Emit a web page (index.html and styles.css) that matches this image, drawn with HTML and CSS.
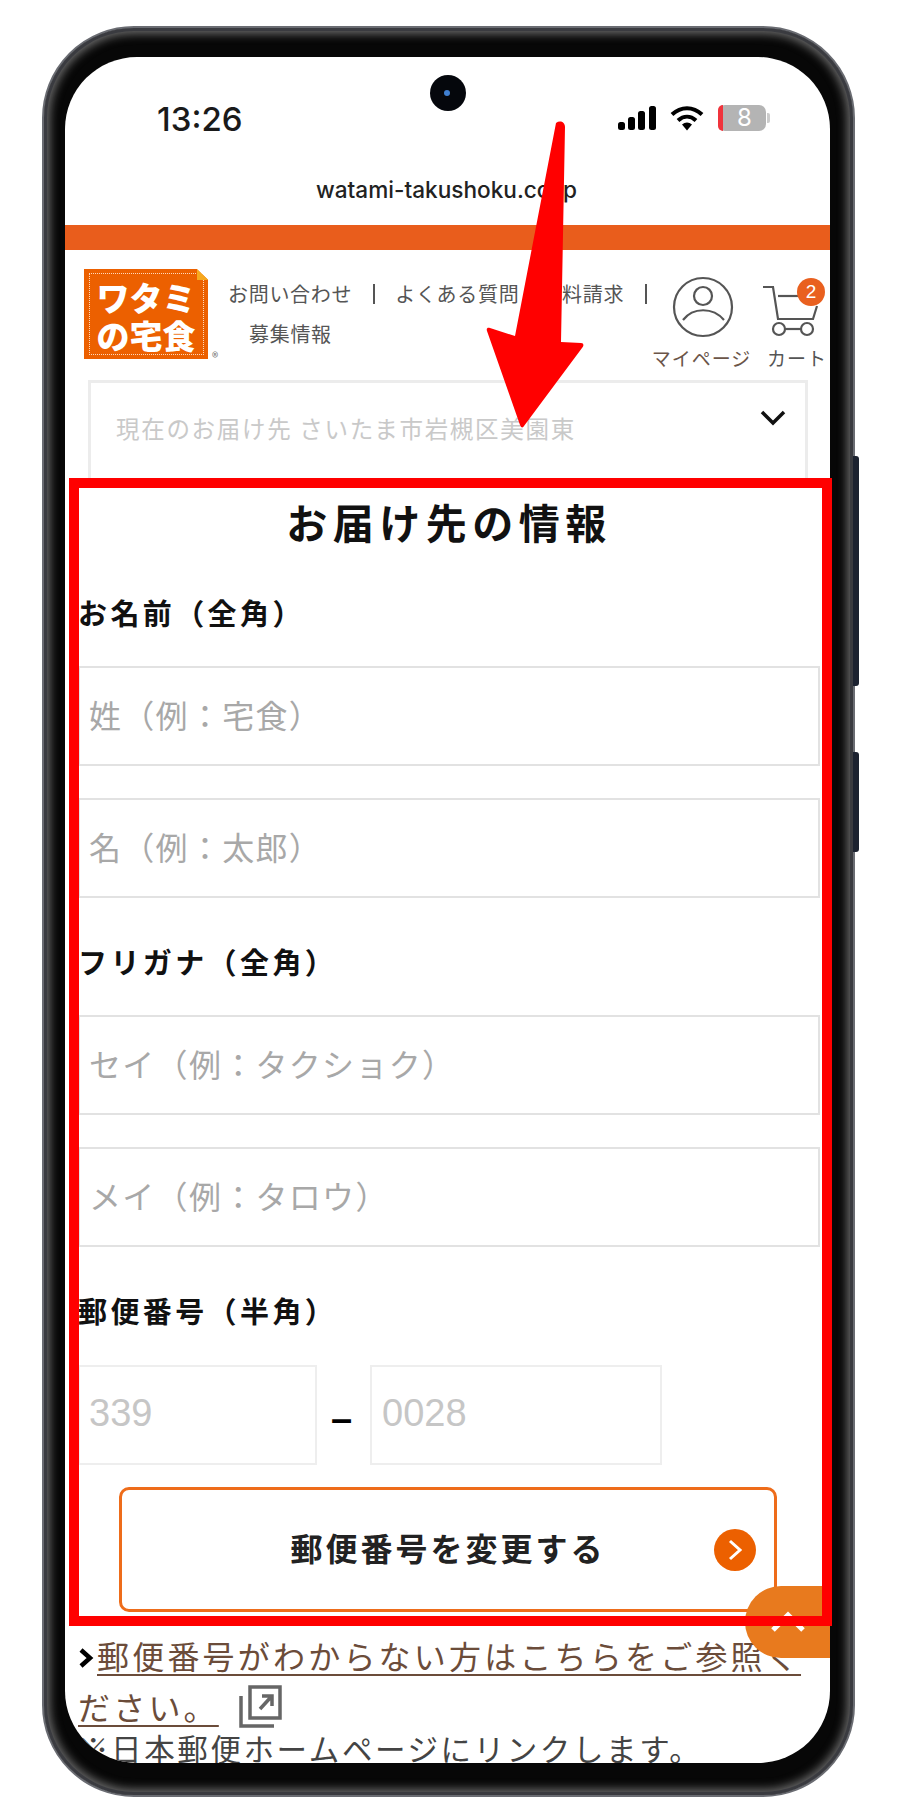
FILE: index.html
```html
<!DOCTYPE html>
<html lang="ja">
<head>
  <meta charset="UTF-8">
  <title>お届け先の情報</title>
  <link rel="stylesheet" href="styles.css">
</head>
<body>
  <div class="stage">
    <div class="side-btn side-btn-long"></div>
    <div class="side-btn side-btn-short"></div>

    <div class="phone">
      <div class="screen">
        <!-- status bar -->
        <div class="status">
          <span class="time">13:26</span>
          <div class="status-icons">
            <svg width="38" height="24" viewBox="0 0 38 24">
              <rect x="0" y="16" width="7" height="8" rx="2.5"/>
              <rect x="10" y="11" width="7" height="13" rx="2.5"/>
              <rect x="20" y="5" width="7" height="19" rx="2.5"/>
              <rect x="31" y="0" width="7" height="24" rx="2.5"/>
            </svg>
            <svg width="34" height="25" viewBox="0 0 34 25">
              <path d="M2 8.5C11 0 23 0 32 8.5" class="wifi-arc"/>
              <path d="M8 14.5C13.500 9.500 20.500 9.500 26 14.500" class="wifi-arc"/>
              <path d="M12 18.500L17 24.500L22 18.500C19 15.800 15 15.800 12 18.500Z"/>
            </svg>
            <div class="battery"><span class="battery-low"></span>8</div>
            <span class="battery-nub"></span>
          </div>
        </div>
        <div class="url">watami-takushoku.co.jp</div>
        <div class="orange-bar"></div>

        <!-- site header -->
        <header class="site-header">
          <div class="logo">
            <div class="logo-dots"></div>
            <span class="logo-line">ワタミ</span>
            <span class="logo-line">の宅食</span>
            <span class="logo-fold"></span>
          </div>
          <span class="logo-mark">®</span>
          <ul class="head-nav">
            <li>お問い合わせ</li>
            <li>よくある質問</li>
            <li>資料請求</li>
            <li>募集情報</li>
          </ul>
          <div class="head-icons">
            <div class="head-icon mypage">
              <svg width="62" height="62" viewBox="0 0 62 62" class="line-icon">
                <circle cx="32" cy="31" r="29"/>
                <circle cx="32" cy="20" r="9"/>
                <path d="M12 44C22 31 42 31 53 44"/>
              </svg>
              <span>マイページ</span>
            </div>
            <div class="head-icon cart">
              <svg width="62" height="62" viewBox="0 0 62 62" class="line-icon">
                <path d="M-3 11H7L12 43H47L51 30"/>
                <path d="M12 20H40"/>
                <circle cx="13" cy="53" r="6"/>
                <circle cx="41" cy="53" r="6"/>
                <path d="M19 53H35"/>
              </svg>
              <span class="badge">2</span>
              <span>カート</span>
            </div>
          </div>
        </header>

        <div class="area-select">
          <span>現在のお届け先 さいたま市岩槻区美園東</span>
          <svg width="26" height="16" viewBox="0 0 26 16" class="area-chevron">
            <path d="M2 2L13 13L24 2"/>
          </svg>
        </div>

        <!-- form -->
        <section class="form">
          <h1>お届け先の情報</h1>

          <div class="label">お名前（全角）</div>
          <div class="field">姓（例：宅食）</div>
          <div class="field">名（例：太郎）</div>

          <div class="label">フリガナ（全角）</div>
          <div class="field">セイ（例：タクショク）</div>
          <div class="field">メイ（例：タロウ）</div>

          <div class="label">郵便番号（半角）</div>
          <div class="zip-row">
            <div class="field zip zip-first">339</div>
            <span class="zip-dash">–</span>
            <div class="field zip zip-second">0028</div>
          </div>

          <div class="change-btn">
            <span>郵便番号を変更する</span>
            <span class="change-arrow">
              <svg width="16" height="24" viewBox="0 0 16 24"><path d="M3 3L13 12L3 21"/></svg>
            </span>
          </div>
        </section>

        <div class="notes">
          <p class="zip-link">
            <svg width="16" height="22" viewBox="0 0 16 22" class="link-chevron"><path d="M3 3L12 11L3 19"/></svg><a>郵便番号がわからない方はこちらをご参照ください。</a>
            <svg width="44" height="44" viewBox="0 0 44 44" class="ext-icon">
              <path d="M11 3H41V34H11Z"/>
              <path d="M2 12V42H35"/>
              <path d="M21 25L32 13M23 12H33V22"/>
            </svg>
          </p>
          <p class="zip-note">※日本郵便ホームページにリンクします。</p>
        </div>

        <div class="to-top">
          <svg width="36" height="22" viewBox="0 0 36 22"><path d="M3 19L18 4L33 19"/></svg>
        </div>
      </div>
    </div>

    <!-- camera hole and red annotations lie over the page -->
    <div class="camera"><span></span></div>
    <div class="red-frame"></div>
    <svg class="red-arrow" width="110" height="320" viewBox="0 0 110 320">
      <path d="M76 8C80 5 85 7 85 12L81 227L101 228C104 228 104 231 102 233L44 311C43 313 41 313 40 310L7 216C6 213 8 212 10 213L35 221Z"/>
    </svg>
  </div>
</body>
</html>
```

FILE: styles.css
```css
* {
  box-sizing: border-box;
}
body {
  margin: 0;
  background: #fff;
  font-family: "Noto Sans CJK JP", sans-serif;
  color: #111;
}
p, ul, h1 {
  margin: 0;
  padding: 0;
}
.stage {
  position: relative;
  width: 900px;
  height: 1800px;
  overflow: hidden;
  padding: 26px 0 0 42px;
}

/* phone body */
.phone {
  width: 813px;
  height: 1771px;
  padding: 29px 23px 0 21px;
  background: #070707;
  border: 2px solid #6a6c72;
  border-radius: 92px;
  box-shadow: inset 0 0 0 3px #3a3b40, inset 0 0 10px 6px #6a6a6a;
}
.screen {
  position: relative;
  width: 765px;
  height: 1706px;
  overflow: hidden;
  background: #fff;
  border-radius: 72px;
}
.side-btn {
  position: absolute;
  left: 853px;
  width: 6px;
  background: #1c2230;
  border-radius: 0 3px 3px 0;
}
.side-btn-long {
  top: 456px;
  height: 230px;
}
.side-btn-short {
  top: 752px;
  height: 100px;
}
.camera {
  position: absolute;
  left: 430px;
  top: 75px;
  width: 36px;
  height: 36px;
  background: #05070c;
  border-radius: 50%;
}
.camera span {
  display: block;
  width: 6px;
  height: 6px;
  margin: 15px 0 0 14px;
  background: #3f7fd0;
  border-radius: 50%;
}

/* status bar */
.status {
  display: flex;
  align-items: center;
  height: 32px;
  margin-top: 45px;
  padding: 0 60px 0 92px;
}
.time {
  padding-top: 2px;
  font-family: Inter, sans-serif;
  font-size: 33px;
  font-weight: 500;
  color: #1a1a1a;
}
.status-icons {
  display: flex;
  align-items: center;
  margin-left: auto;
}
.status-icons svg {
  fill: #000;
  margin-right: 14px;
}
.wifi-arc {
  fill: none;
  stroke: #000;
  stroke-width: 4;
}
.battery {
  position: relative;
  width: 48px;
  height: 26px;
  background: #b4b4b4;
  border-radius: 7px;
  font-family: Inter, sans-serif;
  font-size: 24px;
  line-height: 26px;
  color: #fff;
  text-align: center;
  padding-left: 5px;
}
.battery-low {
  position: absolute;
  left: 0;
  top: 0;
  width: 5px;
  height: 26px;
  background: #f0343c;
  border-radius: 5px 0 0 5px;
}
.battery-nub {
  width: 3px;
  height: 10px;
  margin-left: 1px;
  background: #ccc;
  border-radius: 0 2px 2px 0;
}
.url {
  margin-top: 41px;
  font-family: Inter, sans-serif;
  font-size: 22.6px;
  font-weight: 500;
  line-height: 30px;
  color: #222;
  text-align: center;
  padding-right: 2px;
}
.orange-bar {
  height: 25px;
  margin-top: 20px;
  background: #e95d1c;
}

/* header */
.site-header {
  position: relative;
  display: flex;
  height: 130px;
  padding: 19px 4px 0 19px;
}
.logo {
  position: relative;
  flex: none;
  width: 124px;
  height: 90px;
  padding-top: 9px;
  background: #ec6000;
  color: #fff;
  font-weight: 900;
  text-align: center;
  clip-path: polygon(0 0, 91% 0, 100% 12%, 100% 100%, 0 100%);
}
.logo-dots {
  position: absolute;
  left: 5px;
  top: 4px;
  right: 4px;
  bottom: 4px;
  border: 1.5px dotted #fcd9bd;
}
.logo-line {
  display: block;
  font-size: 33px;
  line-height: 38px;
}
.logo-fold {
  position: absolute;
  right: 0;
  top: 0;
  width: 11px;
  height: 11px;
  background: #f6a81e;
}
.logo-mark {
  position: absolute;
  left: 147px;
  top: 97px;
  font-size: 13px;
  color: #777;
}
.head-nav {
  flex: none;
  display: flex;
  flex-wrap: wrap;
  align-content: flex-start;
  width: 444px;
  list-style: none;
  font-size: 20px;
  letter-spacing: 0.7px;
  line-height: 40px;
  color: #555;
  margin-top: 5px;
}
.head-nav li {
  display: flex;
  align-items: center;
  margin-left: 20px;
}
.head-nav li::after {
  content: "";
  width: 2px;
  height: 20px;
  margin-left: 21px;
  background: #555;
}
.head-nav li:nth-child(2)::after {
  display: none;
}
.head-nav li:nth-child(3) {
  margin-left: 22px;
}
.head-nav li:last-child {
  margin-left: 41px;
}
.head-nav li:last-child::after {
  display: none;
}
.head-icons {
  display: flex;
  gap: 17px;
  margin-left: auto;
  margin-top: 7px;
}
.head-icon {
  position: relative;
  display: flex;
  flex-direction: column;
  align-items: center;
  font-size: 19px;
  letter-spacing: 1px;
  line-height: 26px;
  white-space: nowrap;
  color: #555;
}
.mypage {
  width: 99px;
  color: #6b5548;
}
.cart {
  width: 58px;
}
.line-icon {
  flex: none;
  margin-bottom: 7px;
  overflow: visible;
  fill: none;
  stroke: #555;
  stroke-width: 2.2;
}
.badge {
  position: absolute;
  left: 29px;
  top: 2px;
  width: 28px;
  height: 28px;
  background: #e9601f;
  border-radius: 50%;
  color: #fff;
  font-family: "Liberation Sans", sans-serif;
  font-size: 19px;
  line-height: 28px;
  letter-spacing: 0;
  text-align: center;
}

/* current address box */
.area-select {
  position: relative;
  height: 104px;
  margin: 0 22px 0 23px;
  padding: 27px 0 0 25px;
  border: 3px solid #ececec;
  font-size: 23.5px;
  letter-spacing: 1.7px;
  line-height: 36px;
  color: #c9c9c9;
}
.area-chevron {
  position: absolute;
  left: 669px;
  top: 27px;
  fill: none;
  stroke: #111;
  stroke-width: 3.5;
}

/* form */
.form {
  margin-top: -3px;
  padding: 0 10px 0 13px;
}
.form h1 {
  height: 85px;
  padding-top: 12px;
  font-size: 41px;
  font-weight: 700;
  line-height: 56px;
  letter-spacing: 5.5px;
  text-align: center;
}
.label {
  margin-top: 43px;
  font-size: 29px;
  font-weight: 700;
  line-height: 40px;
  letter-spacing: 3.4px;
}
.form h1 + .label {
  margin-top: 26px;
}
.field {
  height: 100px;
  margin-top: 32px;
  padding-left: 9px;
  border: 2.500px solid #e2e2e2;
  font-size: 32px;
  letter-spacing: 1.3px;
  line-height: 92px;
  color: #a8a8a8;
}
.label + .field {
  margin-top: 34px;
}
.zip-row {
  display: flex;
  align-items: center;
  margin-top: 35px;
}
.zip {
  height: 100px;
  margin-top: 0;
  border-color: #eee;
  font-family: "Liberation Sans", sans-serif;
  font-size: 38px;
  letter-spacing: 0;
  color: #c6c6c6;
}
.zip-first {
  width: 239px;
}
.zip-second {
  width: 292px;
  padding-left: 10px;
}
.zip-dash {
  width: 53px;
  padding: 8px 4px 0 0;
  font-family: "Liberation Sans", sans-serif;
  font-size: 38px;
  font-weight: 700;
  color: #000;
  text-align: center;
}
.change-btn {
  position: relative;
  height: 125px;
  margin: 22px 43px 0 41px;
  border: 3px solid #ee6c1a;
  border-radius: 10px;
  font-size: 32px;
  font-weight: 700;
  line-height: 115px;
  letter-spacing: 3px;
  color: #222;
  text-align: center;
}
.change-arrow {
  position: absolute;
  right: 18px;
  top: 39px;
  display: flex;
  align-items: center;
  justify-content: center;
  width: 42px;
  height: 42px;
  background: #ec6000;
  border-radius: 50%;
}
.change-arrow svg {
  fill: none;
  stroke: #fff;
  stroke-width: 3;
}

/* notes under the form */
.notes {
  padding: 18px 18px 0 13px;
}
.zip-link {
  font-size: 32px;
  line-height: 51px;
  letter-spacing: 3.2px;
  color: #6b4c3a;
}
.zip-link a {
  text-decoration: underline;
  text-decoration-thickness: 2px;
  text-underline-offset: 5px;
}
.link-chevron {
  margin-right: 3px;
  fill: none;
  stroke: #000;
  stroke-width: 4.500;
}
.ext-icon {
  margin-left: 10px;
  vertical-align: -8px;
  fill: none;
  stroke: #666;
  stroke-width: 3.5;
}
.zip-note {
  margin-top: -6px;
  font-size: 30.5px;
  line-height: 44px;
  letter-spacing: 2.6px;
  color: #444;
}

/* scroll to top tab */
.to-top {
  position: absolute;
  right: 0;
  top: 1529px;
  display: flex;
  justify-content: center;
  align-items: flex-start;
  width: 85px;
  height: 72px;
  padding-top: 25px;
  background: #e87a1e;
  border-radius: 36px 0 0 36px;
}
.to-top svg {
  fill: none;
  stroke: #fff;
  stroke-width: 5;
}

/* annotations */
.red-frame {
  position: absolute;
  left: 69px;
  top: 478px;
  width: 763px;
  height: 1148px;
  border: 10px solid #f00;
}
.red-arrow {
  position: absolute;
  left: 480px;
  top: 115px;
  fill: #f00;
}
```
